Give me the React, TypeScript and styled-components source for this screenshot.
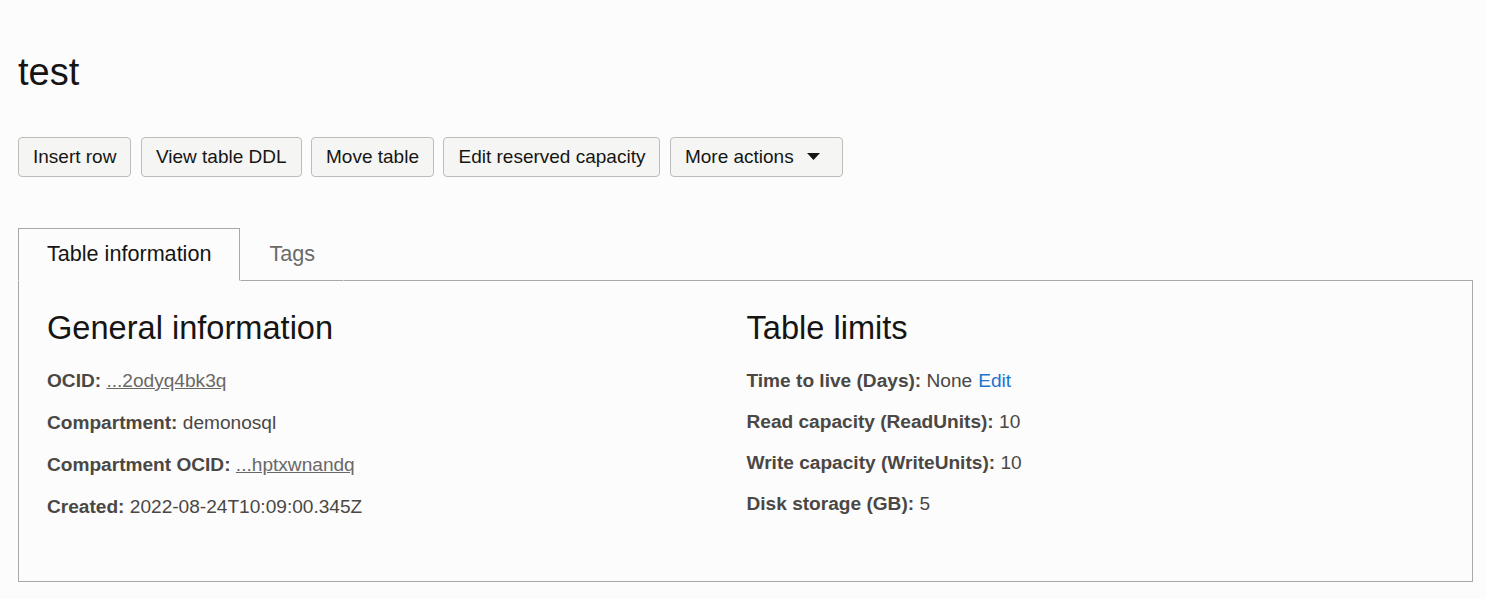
import React from "react";
import styled, { createGlobalStyle } from "styled-components";

const GlobalStyle = createGlobalStyle`
  html, body {
    margin: 0;
    padding: 0;
    background: #fcfcfc;
  }
  body {
    font-family: "Liberation Sans", Arial, sans-serif;
    color: #161513;
  }
  * {
    box-sizing: border-box;
  }
`;

const Page = styled.div`
  padding: 50px 13px 18px 18px;
`;

const Title = styled.h1`
  margin: 0;
  font-size: 38px;
  font-weight: 400;
  line-height: 1.2;
  color: #161513;
`;

const Toolbar = styled.div`
  display: flex;
  gap: 9.5px;
  margin-top: 41px;
`;

const ActionButton = styled.button`
  display: inline-flex;
  align-items: center;
  height: 40px;
  padding: 0 14px;
  font-family: inherit;
  font-size: 19px;
  color: #161513;
  background: #f5f5f4;
  border: 1px solid #bdbcbb;
  border-radius: 4px;
  cursor: pointer;
  &:hover {
    background: #ecebea;
  }
`;

const MenuButton = styled(ActionButton)`
  padding-right: 22px;
  svg {
    margin-left: 13px;
  }
`;

const TabList = styled.div`
  display: flex;
  margin-top: 51px;
`;

const Tab = styled.div<{ $active?: boolean }>`
  display: flex;
  align-items: center;
  height: 53px;
  padding: 0 28px;
  font-size: 21.6px;
  color: ${(p) => (p.$active ? "#161513" : "#6b6a69")};
  border: 1px solid ${(p) => (p.$active ? "#a8a8a8" : "transparent")};
  border-bottom: 1px solid ${(p) => (p.$active ? "transparent" : "#a8a8a8")};
  cursor: pointer;
`;

const TabFiller = styled.div`
  flex: 1;
  border-bottom: 1px solid #a8a8a8;
`;

const Panel = styled.div`
  display: grid;
  grid-template-columns: 1fr 1fr;
  column-gap: 2px;
  padding: 27px 28px 63px 28px;
  border: 1px solid #a8a8a8;
  border-top: none;
`;

const Section = styled.section`
  display: flex;
  flex-direction: column;
`;

const SectionTitle = styled.h2`
  margin: 0 0 22px 0;
  font-size: 32.6px;
  font-weight: 400;
  line-height: 1.2;
  color: #161513;
`;

const Rows = styled.div<{ $gap: number }>`
  display: flex;
  flex-direction: column;
  gap: ${(p) => p.$gap}px;
`;

const Row = styled.div`
  font-size: 19.1px;
  line-height: 23px;
  color: #4a4744;
`;

const Label = styled.span`
  font-weight: 700;
`;

const IdLink = styled.a`
  color: #6a6866;
  text-decoration: underline;
  cursor: pointer;
`;

const EditLink = styled.a`
  color: #1b74d1;
  margin-left: 6px;
  cursor: pointer;
`;

const Caret = () => (
  <svg width="13" height="7" viewBox="0 0 13 7">
    <path d="M0 0 H13 L6.5 7 Z" fill="#161513" />
  </svg>
);

export default function App() {
  return (
    <>
      <GlobalStyle />
      <Page>
        <Title>test</Title>
        <Toolbar>
          <ActionButton>Insert row</ActionButton>
          <ActionButton>View table DDL</ActionButton>
          <ActionButton>Move table</ActionButton>
          <ActionButton>Edit reserved capacity</ActionButton>
          <MenuButton>
            More actions
            <Caret />
          </MenuButton>
        </Toolbar>
        <TabList>
          <Tab $active>Table information</Tab>
          <Tab>Tags</Tab>
          <TabFiller />
        </TabList>
        <Panel>
          <Section>
            <SectionTitle>General information</SectionTitle>
            <Rows $gap={19}>
              <Row>
                <Label>OCID:</Label> <IdLink>...2odyq4bk3q</IdLink>
              </Row>
              <Row>
                <Label>Compartment:</Label> demonosql
              </Row>
              <Row>
                <Label>Compartment OCID:</Label> <IdLink>...hptxwnandq</IdLink>
              </Row>
              <Row>
                <Label>Created:</Label> 2022-08-24T10:09:00.345Z
              </Row>
            </Rows>
          </Section>
          <Section>
            <SectionTitle>Table limits</SectionTitle>
            <Rows $gap={18}>
              <Row>
                <Label>Time to live (Days):</Label> None
                <EditLink>Edit</EditLink>
              </Row>
              <Row>
                <Label>Read capacity (ReadUnits):</Label> 10
              </Row>
              <Row>
                <Label>Write capacity (WriteUnits):</Label> 10
              </Row>
              <Row>
                <Label>Disk storage (GB):</Label> 5
              </Row>
            </Rows>
          </Section>
        </Panel>
      </Page>
    </>
  );
}
